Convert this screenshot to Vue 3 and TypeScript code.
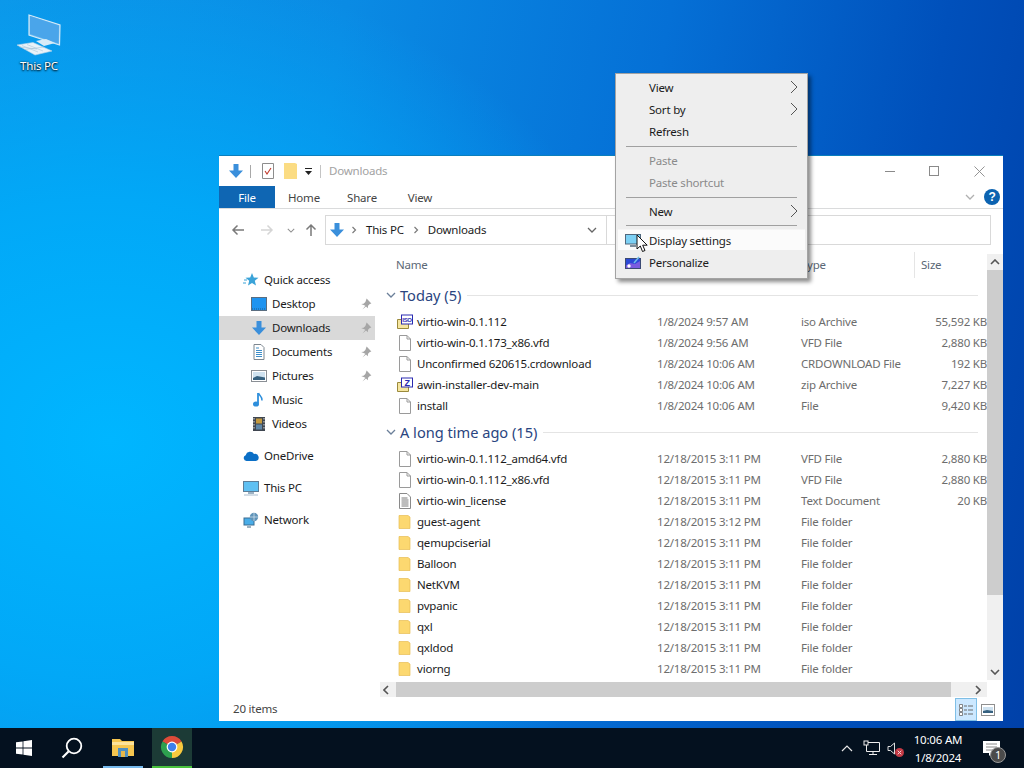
<script setup lang="ts">
interface Row { name: string; date: string; type: string; size: string; icon: string; badge?: string }
const today: Row[] = [
  { name: 'virtio-win-0.1.112', date: '1/8/2024 9:57 AM', type: 'iso Archive', size: '55,592 KB', icon: 'i-arch', badge: 'ISO' },
  { name: 'virtio-win-0.1.173_x86.vfd', date: '1/8/2024 9:56 AM', type: 'VFD File', size: '2,880 KB', icon: 'i-file' },
  { name: 'Unconfirmed 620615.crdownload', date: '1/8/2024 10:06 AM', type: 'CRDOWNLOAD File', size: '192 KB', icon: 'i-file' },
  { name: 'awin-installer-dev-main', date: '1/8/2024 10:06 AM', type: 'zip Archive', size: '7,227 KB', icon: 'i-arch', badge: 'Z' },
  { name: 'install', date: '1/8/2024 10:06 AM', type: 'File', size: '9,420 KB', icon: 'i-file' }
]
const old: Row[] = [
  { name: 'virtio-win-0.1.112_amd64.vfd', date: '12/18/2015 3:11 PM', type: 'VFD File', size: '2,880 KB', icon: 'i-file' },
  { name: 'virtio-win-0.1.112_x86.vfd', date: '12/18/2015 3:11 PM', type: 'VFD File', size: '2,880 KB', icon: 'i-file' },
  { name: 'virtio-win_license', date: '12/18/2015 3:11 PM', type: 'Text Document', size: '20 KB', icon: 'i-text' },
  ...['guest-agent', 'qemupciserial', 'Balloon', 'NetKVM', 'pvpanic', 'qxl', 'qxldod', 'viorng'].map((name, i) => ({
    name,
    date: i === 0 ? '12/18/2015 3:12 PM' : '12/18/2015 3:11 PM',
    type: 'File folder',
    size: '',
    icon: 'i-folder'
  }))
]
const groups = [
  { title: 'Today (5)', rows: today },
  { title: 'A long time ago (15)', rows: old }
]
const quick = [
  { name: 'Desktop', icon: 'i-desktop', pin: true, active: false },
  { name: 'Downloads', icon: 'i-down', pin: true, active: true },
  { name: 'Documents', icon: 'i-docs', pin: true, active: false },
  { name: 'Pictures', icon: 'i-pics', pin: true, active: false },
  { name: 'Music', icon: 'i-music', pin: false, active: false },
  { name: 'Videos', icon: 'i-videos', pin: false, active: false }
]
const roots = [
  { name: 'OneDrive', icon: 'i-cloud' },
  { name: 'This PC', icon: 'i-pc' },
  { name: 'Network', icon: 'i-net' }
]
const menu = [
  [{ t: 'View', arrow: true }, { t: 'Sort by', arrow: true }, { t: 'Refresh' }],
  [{ t: 'Paste', off: true }, { t: 'Paste shortcut', off: true }],
  [{ t: 'New', arrow: true }],
  [{ t: 'Display settings', icon: 'i-display', hot: true }, { t: 'Personalize', icon: 'i-person' }]
]
</script>

<template>
  <div class="screen">
    <svg class="defs" width="0" height="0" aria-hidden="true">
      <symbol id="i-down" viewBox="0 0 16 16"><path d="M5.500 1h5v6.500h4.500L8 15 1 7.500h4.500z" fill="#3a8fdb" /></symbol>
      <symbol id="i-file" viewBox="0 0 16 16"><path d="M2.500 .5h7.500l3.500 3.500v11.500h-11z" fill="#fff" stroke="#9a9a9a" /><path d="M10 .5v3.500h3.500" fill="none" stroke="#9a9a9a" /></symbol>
      <symbol id="i-text" viewBox="0 0 16 16"><path d="M2.500 .5h7.500l3.500 3.500v11.500h-11z" fill="#fff" stroke="#8a8a8a" /><path d="M4.500 5h6M4.500 7h7M4.500 9h7M4.500 11h7M4.500 13h7" stroke="#7b7b7b" /></symbol>
      <symbol id="i-folder" viewBox="0 0 16 16"><path d="M2 1.500h9l2 1.500v11.500h-11z" fill="#fcd870" stroke="#e6bd55" stroke-width=".7" /></symbol>
      <symbol id="i-arch" viewBox="0 0 16 16"><path d="M.5 5.500h11v9h-11z" fill="#f6e6a0" stroke="#9b8a3c" /><path d="M4 .5h12v10h-12z" fill="#2a2ab0" /><rect x="5" y="1.500" width="10" height="8" fill="#fff" /></symbol>
      <symbol id="i-desktop" viewBox="0 0 16 16"><rect x=".5" y="1.500" width="15" height="13" fill="#1f94f0" stroke="#5a6d80" /><path d="M1 13h14" stroke="#1c5a8f" stroke-dasharray="1 1" /></symbol>
      <symbol id="i-docs" viewBox="0 0 16 16"><path d="M3 .5h7l3 3v12h-10z" fill="#fff" stroke="#7d8790" /><path d="M5 4h3M5 6.500h6M5 8.500h6M5 10.500h6M5 12.500h6" stroke="#3d8ec9" /></symbol>
      <symbol id="i-pics" viewBox="0 0 16 16"><rect x=".5" y="2.500" width="15" height="11" fill="#fff" stroke="#8a8f95" /><rect x="2" y="4" width="12" height="8" fill="#cfe2f0" /><path d="M2 10l4-2 8 1.500v2.500h-12z" fill="#35607f" /></symbol>
      <symbol id="i-music" viewBox="0 0 16 16"><path d="M7 1v10.500" stroke="#2e8fdc" stroke-width="1.800" fill="none" /><path d="M7.500 1c.5 2.500 4 3.500 3.500 7.500" stroke="#2e8fdc" stroke-width="1.500" fill="none" /><ellipse cx="5" cy="12" rx="3" ry="2.600" fill="#2e8fdc" /></symbol>
      <symbol id="i-videos" viewBox="0 0 16 16"><rect x="2" y="1" width="12" height="14" fill="#3f4650" /><rect x="5" y="2.500" width="6" height="5" fill="#c49a3f" /><rect x="5" y="8.500" width="6" height="5" fill="#5f87a8" /><path d="M3 2v12M13 2v12" stroke="#ddd" stroke-dasharray="1.500 1.500" /></symbol>
      <symbol id="i-cloud" viewBox="0 0 16 16"><path d="M3.500 13A3 3 0 0 1 2.700 7.200 4.500 4.500 0 0 1 11 6a3.500 3.500 0 0 1 2 7z" fill="#0b6fc6" /></symbol>
      <symbol id="i-pc" viewBox="0 0 16 16"><rect x=".5" y="1.500" width="15" height="10" fill="#5fc0f2" stroke="#5d7d97" /><path d="M5 13h6" stroke="#7c9ab2" stroke-width="1.500" /><path d="M1 15h14" stroke="#a8bccd" /></symbol>
      <symbol id="i-net" viewBox="0 0 16 16"><rect x="1" y="6" width="10" height="7" fill="#49ade8" stroke="#3a6d92" /><path d="M4 15h4" stroke="#5e7f96" stroke-width="1.200" /><circle cx="11" cy="5" r="4.200" fill="#5f93b8" /><path d="M7 5h8M11 1v8" stroke="#d8e6ef" stroke-width=".7" /></symbol>
      <symbol id="i-pin" viewBox="0 0 10 10"><path d="M5.500.5l4 4-1.300.5-1.500 1.500-.2 2-1.500-1.500-3 2.500 2.500-3L1 5l2-.2L4.500 3.300z" fill="#a6a6a6" /></symbol>
      <symbol id="i-display" viewBox="0 0 16 13"><rect x=".5" y=".5" width="15" height="9.500" fill="#7cd0f4" stroke="#50687d" /><path d="M5 12h6" stroke="#50687d" stroke-width="1.500" /></symbol>
      <symbol id="i-person" viewBox="0 0 16 13"><rect x=".5" y="2.500" width="15" height="10" fill="#2a49d6" stroke="#3b4a74" /><path d="M1 9.500l4-2.500 5 1 5-3v7h-14z" fill="#7a5ce0" /><path d="M9 7l5-6" stroke="#6fb9e8" stroke-width="1.600" /><circle cx="4" cy="10" r="1.700" fill="#fff" /></symbol>
      <symbol id="i-chev" viewBox="0 0 10 6"><path d="M1 1l4 4 4-4" fill="none" stroke="currentColor" stroke-width="1.300" /></symbol>
      <symbol id="i-crumb" viewBox="0 0 6 8"><path d="M1.500 1l3 3-3 3" fill="none" stroke="#7a7a7a" stroke-width="1.200" /></symbol>
    </svg>

    <div class="desk-icon">
      <svg width="48" height="46" viewBox="15 10 48 46">
        <path d="M29 13 60 23 59.500 43 29 33z" fill="#6fbcf0" stroke="#d2e9f8" stroke-width="1.200" />
        <path d="M30 14 59 23.500 58.500 41.500 30 32z" fill="#4aa5ea" />
        <path d="M36 39 46 37 55 41 44 44z" fill="#d8ebf7" />
        <path d="M17 43 33 40.500 52 49 35 53z" fill="#e8f2f9" stroke="#b9d4e6" stroke-width=".6" />
        <path d="M22 43.500 38 50M27 42.500 43 49M19.500 45 37 47M25 47.500 44 45" stroke="#9cbcd2" stroke-width=".5" />
      </svg>
      <span>This PC</span>
    </div>

    <section class="win">
      <header class="title">
        <svg class="ti-down"><use href="#i-down" /></svg>
        <i class="tsep"></i>
        <svg class="ti-check" viewBox="0 0 12 16">
          <path d="M.5 .5h11v15H.5z" fill="#fff" stroke="#8d8d8d" />
          <path d="M3 8l2 3 4-6" fill="none" stroke="#c0392b" stroke-width="1.100" />
        </svg>
        <svg class="ti-folder" viewBox="0 0 13 16"><path d="M0 0h11l2 1v15H0z" fill="#fbdc83" /></svg>
        <svg class="ti-drop" viewBox="0 0 7 7"><path d="M0 0h7v1H0zM0 3h7L3.500 7z" fill="#222" /></svg>
        <i class="tsep sep2"></i>
        <span class="ttext">Downloads</span>
        <div class="controls">
          <i class="min"></i>
          <i class="max"></i>
          <svg class="close" viewBox="0 0 12 12"><path d="M.5.5l11 11M11.500.5l-11 11" stroke="#8a8a8a" /></svg>
        </div>
      </header>

      <nav class="tabs">
        <span class="file">File</span>
        <span class="tab">Home</span>
        <span class="tab">Share</span>
        <span class="tab">View</span>
        <svg class="rchev"><use href="#i-chev" /></svg>
        <span class="help">?</span>
      </nav>

      <div class="navbar">
        <svg class="nb back" viewBox="0 0 14 12"><path d="M13 6H2M6.500 1.500 2 6l4.500 4.500" fill="none" stroke="#7a7a7a" stroke-width="1.500" /></svg>
        <svg class="nb fwd" viewBox="0 0 14 12"><path d="M1 6h11M7.500 1.500 12 6l-4.500 4.500" fill="none" stroke="#d5d5d5" stroke-width="1.500" /></svg>
        <svg class="nbchev" viewBox="0 0 10 6"><path d="M1 1l4 4 4-4" fill="none" stroke="#8f8f8f" stroke-width="1.300" /></svg>
        <svg class="nb up" viewBox="0 0 12 14"><path d="M6 13V2M1.500 6.500 6 2l4.500 4.500" fill="none" stroke="#7a7a7a" stroke-width="1.500" /></svg>
        <div class="addr">
          <svg class="addr-ic"><use href="#i-down" /></svg>
          <svg class="crumb"><use href="#i-crumb" /></svg>
          <span>This PC</span>
          <svg class="crumb"><use href="#i-crumb" /></svg>
          <span>Downloads</span>
          <svg class="addr-chev"><use href="#i-chev" /></svg>
        </div>
        <div class="search"></div>
      </div>

      <div class="body">
        <aside class="side">
          <div class="sitem root">
            <svg class="sic" viewBox="0 0 16 16"><path d="M9 1l1.800 4.500 4.700.3-3.700 3 1.200 4.700L9 11l-4 2.500 1.200-4.700-3.700-3 4.700-.3z" fill="#3aa3d8" /><path d="M1 8h3M0 11h3" stroke="#3aa3d8" /></svg>
            <span>Quick access</span>
          </div>
          <div v-for="q in quick" :key="q.name" class="sitem child" :class="{ active: q.active }">
            <svg class="sic"><use :href="'#' + q.icon" /></svg>
            <span>{{ q.name }}</span>
            <svg v-if="q.pin" class="pin"><use href="#i-pin" /></svg>
          </div>
          <div v-for="r in roots" :key="r.name" class="sitem root spaced">
            <svg class="sic"><use :href="'#' + r.icon" /></svg>
            <span>{{ r.name }}</span>
          </div>
        </aside>

        <main class="pane">
          <div class="columns">
            <span class="col-name">Name</span>
            <span class="col-type">Type</span>
            <i class="col-sep"></i>
            <span class="col-size">Size</span>
          </div>
          <div class="list">
            <section v-for="g in groups" :key="g.title" class="group">
              <div class="ghead">
                <svg class="gchev"><use href="#i-chev" /></svg>
                <span>{{ g.title }}</span>
                <i></i>
              </div>
              <div v-for="r in g.rows" :key="r.name" class="row">
                <span class="ric">
                  <svg><use :href="'#' + r.icon" /></svg>
                  <b v-if="r.badge" :class="{ z: r.badge === 'Z' }">{{ r.badge }}</b>
                </span>
                <span class="rname">{{ r.name }}</span>
                <span class="rdate">{{ r.date }}</span>
                <span class="rtype">{{ r.type }}</span>
                <span class="rsize">{{ r.size }}</span>
              </div>
            </section>
          </div>
          <div class="hbar">
            <svg class="hb-arrow" viewBox="0 0 6 10"><path d="M5 1 1 5l4 4" fill="none" stroke="#555" stroke-width="1.600" /></svg>
            <div class="hb-thumb"></div>
            <svg class="hb-arrow" viewBox="0 0 6 10"><path d="M1 1l4 4-4 4" fill="none" stroke="#555" stroke-width="1.600" /></svg>
          </div>
        </main>

        <div class="vbar">
          <svg class="vb-arrow" viewBox="0 0 10 6"><path d="M1 5l4-4 4 4" fill="none" stroke="#555" stroke-width="1.600" /></svg>
          <div class="vb-track"><div class="vb-thumb"></div></div>
          <svg class="vb-arrow" viewBox="0 0 10 6"><path d="M1 1l4 4 4-4" fill="none" stroke="#555" stroke-width="1.600" /></svg>
        </div>
      </div>

      <footer class="status">
        <span>20 items</span>
        <div class="views">
          <div class="vbtn on">
            <svg width="16" height="16" viewBox="0 0 16 16"><path d="M1.500 2.500h3v3h-3zM1.500 6.500h3v3h-3zM1.500 10.500h3v3h-3z" fill="#fff" stroke="#6a6a6a" stroke-width=".8" /><path d="M6 4h3M10 4h5M6 8h3M10 8h5M6 12h3M10 12h5" stroke="#6a6a6a" /></svg>
          </div>
          <div class="vbtn">
            <svg width="14" height="12" viewBox="0 0 14 12"><rect x=".5" y=".5" width="13" height="11" fill="#fff" stroke="#8f8f8f" /><path d="M2 3h10v6H2z" fill="#cfe2f0" /><path d="M2 7l4-1 6 1v2H2z" fill="#35607f" /></svg>
          </div>
        </div>
      </footer>
    </section>

    <div class="menu">
      <template v-for="(grp, gi) in menu" :key="gi">
        <i v-if="gi > 0" class="msep" :class="{ tight: gi === 3 }"></i>
        <div v-for="m in grp" :key="m.t" class="mitem" :class="{ off: m.off, hot: m.hot }">
          <svg v-if="m.icon" class="mic"><use :href="'#' + m.icon" /></svg>
          <span>{{ m.t }}</span>
          <svg v-if="m.arrow" class="marrow" viewBox="0 0 8 14"><path d="M1 1l6 6-6 6" fill="none" stroke="#555" /></svg>
        </div>
      </template>
    </div>

    <svg class="cursor" width="13" height="19" viewBox="0 0 13 19"><path d="M1 1v14l3.300-3 2.200 5.500 2.500-1-2.300-5.300h4.500z" fill="#fff" stroke="#111" /></svg>

    <footer class="taskbar">
      <div class="tb-btn">
        <svg width="16" height="16" viewBox="0 0 16 16"><path d="M0 2.300 6.600 1.400v6.200H0zM7.400 1.300 16 0v7.600H7.400zM0 8.400h6.600v6.200L0 13.700zM7.400 8.400H16V16l-8.600-1.300z" fill="#fff" /></svg>
      </div>
      <div class="tb-btn">
        <svg width="22" height="22" viewBox="0 0 22 22"><circle cx="13" cy="9" r="7.300" fill="none" stroke="#fff" stroke-width="1.800" /><path d="M7.500 14.500 1.500 20.500" stroke="#fff" stroke-width="2.200" /></svg>
      </div>
      <div class="tb-btn run">
        <svg width="22" height="19" viewBox="0 0 22 19"><path d="M0 1h8l2 2h12v15H0z" fill="#f6c64f" /><path d="M0 4h22v3H0z" fill="#fde39a" /><rect x="6" y="10" width="10" height="9" fill="#4f8fc0" /><rect x="9" y="13" width="4" height="6" fill="#e6b84c" /></svg>
      </div>
      <div class="tb-btn chrome">
        <svg width="24" height="24" viewBox="0 0 24 24">
          <path d="M12 12 2.470 6.500A11 11 0 0 1 21.530 6.500z" fill="#dd4b39" />
          <path d="M12 12 21.530 6.500A11 11 0 0 1 12 23z" fill="#f8c93e" />
          <path d="M12 12V23A11 11 0 0 1 2.470 6.500z" fill="#2ea04f" />
          <circle cx="12" cy="12" r="5.400" fill="#fff" />
          <circle cx="12" cy="12" r="4.200" fill="#3f80ea" />
        </svg>
      </div>
      <div class="tray">
        <svg class="t-chev" viewBox="0 0 12 7"><path d="M1 6l5-5 5 5" fill="none" stroke="#e8e8e8" stroke-width="1.200" /></svg>
        <svg class="t-net" width="17" height="16" viewBox="0 0 17 16"><path d="M3.500 2.500h13v9h-13z" fill="none" stroke="#eee" /><path d="M10 11.500v3M6 14.500h8" stroke="#eee" /><rect x="1" y="1" width="4" height="4" fill="#061320" stroke="#eee" /></svg>
        <div class="t-vol">
          <svg width="10" height="13" viewBox="0 0 10 13"><path d="M1 4.500h2.500L7.500 1v11L3.500 8.500H1z" fill="none" stroke="#ddd" /></svg>
          <svg class="t-x" width="9" height="9" viewBox="0 0 9 9"><circle cx="4.500" cy="4.500" r="4.500" fill="#c43a45" /><path d="M2.700 2.700l3.600 3.600M6.300 2.700 2.700 6.300" stroke="#f3d5d8" /></svg>
        </div>
        <div class="clock"><span>10:06 AM</span><span>1/8/2024</span></div>
        <div class="notif">
          <svg width="17" height="15" viewBox="0 0 17 15"><path d="M0 0h17v12h-8l-3 3v-3H0z" fill="#fff" /><path d="M3 3h11M3 6h11M3 9h7" stroke="#8a8a8a" /></svg>
          <span>1</span>
        </div>
      </div>
    </footer>
  </div>
</template>

<style>
html, body { margin: 0; }
</style>
<style scoped>
.screen {
  position: relative;
  width: 1024px;
  height: 768px;
  overflow: hidden;
  display: flex;
  flex-direction: column;
  justify-content: flex-end;
  font-family: "Noto Sans", "Open Sans", sans-serif;
  font-size: 11.5px;
  letter-spacing: -.2px;
  color: #1b1b1b;
  background:
    radial-gradient(ellipse 560px 480px at 110px 440px, #00b6ff 0%, rgba(0, 172, 250, .85) 50%, rgba(0, 150, 240, 0) 100%),
    linear-gradient(100deg, #0c96e8 0%, #0a8be4 30%, #0570d6 58%, #0050bb 82%, #0040a8 100%);
}
.defs { position: absolute; left: 0; top: 0; }
i { display: block; }

.desk-icon {
  position: absolute; left: 9px; top: 10px; width: 60px;
  display: flex; flex-direction: column; align-items: center;
  color: #fff; text-shadow: 0 1px 2px #000, 0 0 2px rgba(0, 0, 0, .7); line-height: 16px;
}
.desk-icon svg { display: block; height: 46px; width: 48px; margin-top: 2px; }

.win {
  position: absolute; left: 219px; top: 155px; width: 784px; height: 565px;
  background: #fff; border-top: 1px solid #0a7fbd;
  display: flex; flex-direction: column;
}
.title { height: 30px; display: flex; align-items: center; flex: none; position: relative; }
.ti-down { width: 16px; height: 16px; margin-left: 9px; }
.tsep { width: 1px; height: 13px; background: #a8a8a8; margin-left: 6px; }
.ti-check { width: 12px; height: 16px; margin-left: 11px; }
.ti-folder { width: 13px; height: 16px; margin-left: 10px; }
.ti-drop { width: 7px; height: 7px; margin-left: 8px; }
.sep2 { margin-left: 8px; background: #c4c4c4; }
.ttext { margin-left: 8px; margin-bottom: 2px; color: #a2a2a2; }
.controls { margin-left: auto; display: flex; align-items: center; width: 118px; position: relative; height: 30px; }
.min { width: 10px; height: 1px; background: #8a8a8a; }
.max { width: 10px; height: 10px; box-sizing: border-box; border: 1px solid #8a8a8a; margin-left: 34px; }
.close { width: 11px; height: 11px; margin-left: 35px; }

.tabs { height: 22px; display: flex; align-items: center; flex: none; border-bottom: 1px solid #dadbdc; color: #444; }
.file { width: 56px; height: 22px; background: #0f66b3; color: #fff; display: flex; align-items: center; justify-content: center; }
.tab { width: 58px; text-align: center; }
.rchev { width: 10px; height: 6px; color: #b0b0b0; margin-left: auto; }
.help { width: 16px; height: 16px; border-radius: 50%; background: #0c63b1; color: #fff; font: 700 12px/16px "Liberation Sans", sans-serif; text-align: center; margin: 0 3px 0 9px; }

.navbar { height: 41px; display: flex; align-items: center; flex: none; padding-top: 1px; box-sizing: border-box; }
.nb { flex: none; }
.back { width: 14px; height: 12px; margin-left: 12px; }
.fwd { width: 14px; height: 12px; margin-left: 15px; }
.nbchev { width: 8px; height: 5px; margin-left: 13px; }
.up { width: 12px; height: 14px; margin-left: 10px; }
.addr { width: 282px; height: 30px; margin-left: 8px; box-sizing: border-box; border: 1px solid #d9d9d9; display: flex; align-items: center; color: #1b1b1b; }
.addr span { margin-bottom: 2px; }
.addr-ic { width: 16px; height: 16px; margin-left: 3px; flex: none; }
.crumb { width: 6px; height: 8px; margin: 0 9px 0 6px; flex: none; }
.crumb + span + .crumb { margin-left: 9px; }
.addr-chev { width: 10px; height: 6px; color: #666; margin-left: auto; margin-right: 9px; flex: none; }
.search { width: 384px; height: 30px; box-sizing: border-box; border: 1px solid #d9d9d9; border-left: 0; }

.body { flex: 1; display: flex; min-height: 0; }
.side { width: 156px; flex: none; padding-top: 18px; box-sizing: border-box; }
.sitem { height: 24px; display: flex; align-items: center; position: relative; }
.sitem span { margin-bottom: 2px; }
.root { padding-left: 24px; }
.root .sic { margin-right: 5px; }
.root.spaced { margin-top: 8px; }
.child { padding-left: 32px; }
.child .sic { margin-right: 5px; }
.sic { width: 16px; height: 16px; flex: none; }
.active { background: #d9d9d9; }
.pin { position: absolute; left: 141px; top: 6px; width: 12px; height: 12px; }

.pane { width: 612px; flex: none; display: flex; flex-direction: column; min-width: 0; }
.columns { height: 30px; flex: none; display: flex; align-items: center; color: #5b6876; position: relative; }
.columns span { margin-bottom: 2px; }
.col-name { position: absolute; left: 21px; }
.col-type { position: absolute; left: 426px; }
.col-size { position: absolute; left: 546px; }
.col-sep { position: absolute; left: 539px; top: 2px; height: 26px; width: 1px; background: #e5e5e5; }
.list { flex: 1; overflow: hidden; padding-left: 6px; min-height: 0; }
.group { margin-top: 2px; }
.group + .group { margin-top: 3px; }
.ghead { height: 26px; display: flex; align-items: center; font-size: 14.6px; letter-spacing: 0; color: #2a4580; margin-bottom: 3px; }
.gchev { width: 10px; height: 6px; color: #6b7f99; margin-left: 5px; margin-right: 4px; flex: none; }
.ghead i { flex: 1; height: 1px; background: #e4e4e4; margin: 0 9px 0 6px; }
.row { height: 21px; display: flex; align-items: center; color: #6d6d6d; }
.ric { position: relative; width: 16px; height: 16px; margin-left: 16px; margin-right: 4px; flex: none; }
.ric svg { display: block; width: 16px; height: 16px; }
.ric b { position: absolute; left: 5px; top: 2px; width: 10px; height: 8px; font: 700 6px/8px "Liberation Sans", sans-serif; letter-spacing: -.3px; color: #2a2ab0; text-align: center; }
.ric b.z { font-size: 9px; }
.rname { width: 240px; color: #1b1b1b; flex: none; white-space: nowrap; }
.rdate { width: 144px; flex: none; white-space: nowrap; }
.rtype { width: 118px; flex: none; white-space: nowrap; }
.rsize { width: 68px; text-align: right; flex: none; white-space: nowrap; }

.hbar { height: 15px; flex: none; margin: 0 0 1px 5px; background: #f0f0f0; display: flex; align-items: center; }
.hb-arrow { width: 6px; height: 10px; flex: none; margin: 0 6px 0 0; }
.hb-arrow:first-child { margin: 0 7px 0 3px; }
.hb-thumb { flex: none; width: 555px; height: 15px; background: #cdcdcd; margin-right: auto; }

.vbar { width: 16px; flex: none; margin-top: 4px; height: 426px; background: #f0f0f0; display: flex; flex-direction: column; align-items: center; }
.vb-arrow { width: 10px; height: 6px; flex: none; margin: 5px 0; }
.vb-track { flex: 1; width: 16px; }
.vb-thumb { height: 325px; background: #cdcdcd; }

.status { height: 21px; padding-bottom: 2px; flex: none; display: flex; align-items: center; padding-left: 14px; color: #444; }
.views { margin-left: auto; display: flex; align-items: center; height: 23px; margin-bottom: -2px; margin-right: 8px; }
.vbtn { display: flex; align-items: center; justify-content: center; }
.vbtn.on { width: 22px; height: 23px; box-sizing: border-box; background: #cce8ff; border: 1px solid #7fbfe6; margin-right: 4px; }

.menu {
  position: absolute; left: 615px; top: 73px; width: 193px; height: 206px; box-sizing: border-box;
  background: #eee; border: 1px solid #a3a3a3; padding: 2px 2px; box-shadow: 3px 3px 4px rgba(0, 0, 0, .45);
}
.msep { height: 1px; background: #a0a0a0; margin: 4px 8px 2px; }
.msep.tight { margin: 3px 8px 3px; }
.mitem { height: 22px; display: flex; align-items: center; padding-left: 31px; position: relative; }
.mitem.off { color: #8a8a8a; }
.mitem.hot { background: linear-gradient(#eee 0, #fbfbfb 1px, #fbfbfb 21px, #eee 21px); }
.mic { position: absolute; left: 7px; top: 5px; width: 16px; height: 13px; }
.marrow { position: absolute; right: 7px; top: 4px; width: 8px; height: 14px; }
.cursor { position: absolute; left: 636px; top: 234px; }

.taskbar { height: 40px; flex: none; background: #04111f; display: flex; align-items: stretch; color: #fff; z-index: 2; }
.tb-btn { width: 48px; display: flex; align-items: center; justify-content: center; box-sizing: border-box; }
.tb-btn.run { width: 40px; margin-left: 7px; border-bottom: 2px solid #76b9ed; }
.tb-btn.chrome { width: 40px; margin-left: 9px; background: #1c3b36; border-bottom: 2px solid #49c23d; }
.tray { margin-left: auto; display: flex; align-items: center; }
.t-chev { width: 12px; height: 7px; margin-right: 10px; }
.t-vol { position: relative; width: 14px; height: 16px; margin-left: 7px; display: flex; align-items: center; }
.t-x { position: absolute; left: 8px; top: 8px; }
.clock { width: 66px; margin-left: 4px; padding-top: 2px; display: flex; flex-direction: column; align-items: center; line-height: 18px; }
.notif { position: relative; align-self: stretch; width: 53px; display: flex; align-items: center; padding-left: 12px; box-sizing: border-box; }
.notif span { position: absolute; left: 19px; top: 19px; width: 16px; height: 16px; border-radius: 50%; background: #4b4b4b; border: 1px solid #999; box-sizing: border-box; text-align: center; font-size: 11px; line-height: 14px; }
</style>
